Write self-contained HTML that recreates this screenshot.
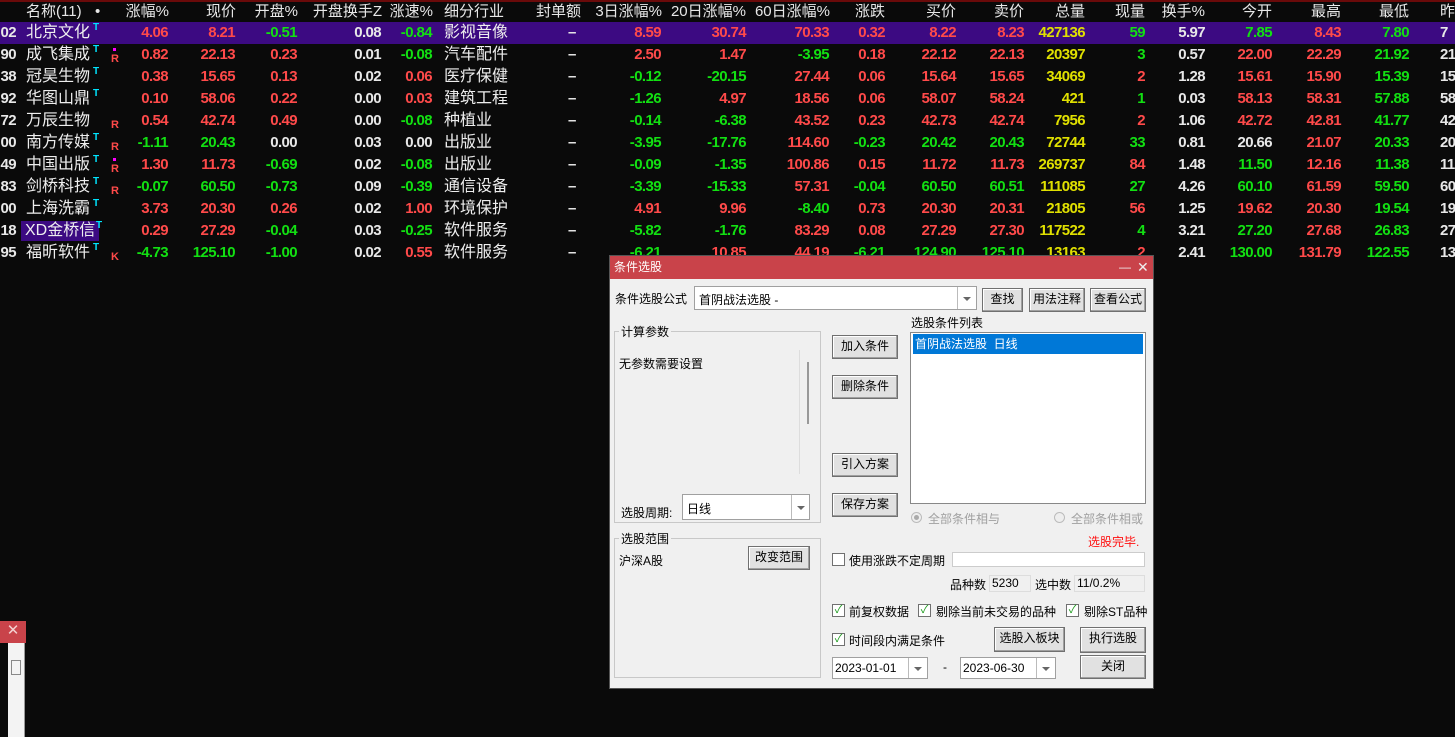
<!DOCTYPE html>
<html><head><meta charset="utf-8"><style>
*{margin:0;padding:0;box-sizing:border-box}
body{width:1455px;height:737px;background:#0a0a0a;overflow:hidden;position:relative;font-family:"Liberation Sans","Noto Sans CJK SC",sans-serif}
.tb{position:absolute;left:0;top:0;width:1455px;font-size:15px;font-weight:bold;letter-spacing:-0.6px}
.row{position:absolute;left:0;width:1455px;height:22px;line-height:22px}
.row span{position:absolute;white-space:nowrap}
.hd{top:0;border-top:2px solid #6a0a0a;color:#e8e8e8;font-weight:normal;line-height:20px;letter-spacing:0}
.n{font-weight:normal;color:#eee;font-size:16px;letter-spacing:0}
.r{color:#ff4a4a}.g{color:#12e012}.w{color:#e8e8e8}.y{color:#e0e000}
.T{color:#00e5ff;font-size:10px;line-height:12px;top:0}
.R{color:#ff4a4a;font-size:11px;top:4px}
.dot{position:absolute;width:3px;height:3px;background:#f0f;left:113px;top:4px}
.c0{right:1439px}.c1{left:26px}.c2{left:111px}
.c3{right:1287px}.c4{right:1220px}.c5{right:1158px}.c6{right:1074px}.c7{right:1023px}
.c8{left:444px}.c9{left:568px}.c10{right:794px}.c11{right:709px}.c12{right:626px}.c13{right:570px}
.c14{right:499px}.c15{right:431px}.c16{right:370px}.c17{right:310px}.c18{right:250px}
.c19{right:183px}.c20{right:114px}.c21{right:46px}.c22{left:1440px}
.dlg{position:absolute;left:609px;top:255px;width:545px;height:434px;background:#f0f0f0;border:1px solid #555;font-size:12px;color:#000;z-index:5}
.dlg *{position:absolute;white-space:nowrap}
.ttl{left:0;top:0;width:543px;height:23px;background:#c9434a;color:#fff;font-size:12px;line-height:22px;padding-left:4px}
.btn{background:#e1e1e1;border:1px solid #707070;box-shadow:inset -1px -1px #a0a0a0,inset 1px 1px #fff;text-align:center;line-height:21px}
.box{background:#fff;border:1px solid #a0a0a0}
.grp{border:1px solid #c8c8c8}
.gl{background:#f0f0f0;padding:0 2px;top:-9px;left:4px}
.cb{width:13px;height:13px;border:1px solid #707070;background:#fff;font-size:11px;line-height:11px;color:#1a9a1a;text-align:center}
.arr{width:0;height:0;border-left:4px solid transparent;border-right:4px solid transparent;border-top:4px solid #666}
</style></head><body>
<div class="tb">
<div class="row hd"><span class="c1" style="left:26px">名称(11)</span><span style="left:95px">•</span><span style="right:1286px">涨幅%</span><span style="right:1219px">现价</span><span style="right:1157px">开盘%</span><span style="right:1073px">开盘换手Z</span><span style="right:1022px">涨速%</span><span class="c8">细分行业</span><span style="left:536px">封单额</span><span style="right:793px">3日涨幅%</span><span style="right:709px">20日涨幅%</span><span style="right:625px">60日涨幅%</span><span style="right:570px">涨跌</span><span style="right:499px">买价</span><span style="right:431px">卖价</span><span style="right:370px">总量</span><span style="right:310px">现量</span><span style="right:250px">换手%</span><span style="right:183px">今开</span><span style="right:114px">最高</span><span style="right:46px">最低</span><span class="c22">昨</span></div>

<div class="row" style="top:22px;background:#3c0a82"><span class="c0 w">02</span><span class="c1 n">北京文化</span><span class="T" style="left:93px">T</span><span class="c3 r">4.06</span><span class="c4 r">8.21</span><span class="c5 g">-0.51</span><span class="c6 w">0.08</span><span class="c7 g">-0.84</span><span class="c8 n">影视音像</span><span class="c9 w">–</span><span class="c10 r">8.59</span><span class="c11 r">30.74</span><span class="c12 r">70.33</span><span class="c13 r">0.32</span><span class="c14 r">8.22</span><span class="c15 r">8.23</span><span class="c16 y">427136</span><span class="c17 g">59</span><span class="c18 w">5.97</span><span class="c19 g">7.85</span><span class="c20 r">8.43</span><span class="c21 g">7.80</span><span class="c22 w">7</span></div>

<div class="row" style="top:44px"><span class="c0 w">90</span><span class="c1 n">成飞集成</span><span class="T" style="left:93px">T</span><i class="dot"></i><span class="c2 R">R</span><span class="c3 r">0.82</span><span class="c4 r">22.13</span><span class="c5 r">0.23</span><span class="c6 w">0.01</span><span class="c7 g">-0.08</span><span class="c8 n">汽车配件</span><span class="c9 w">–</span><span class="c10 r">2.50</span><span class="c11 r">1.47</span><span class="c12 g">-3.95</span><span class="c13 r">0.18</span><span class="c14 r">22.12</span><span class="c15 r">22.13</span><span class="c16 y">20397</span><span class="c17 g">3</span><span class="c18 w">0.57</span><span class="c19 r">22.00</span><span class="c20 r">22.29</span><span class="c21 g">21.92</span><span class="c22 w">21</span></div>

<div class="row" style="top:66px"><span class="c0 w">38</span><span class="c1 n">冠昊生物</span><span class="T" style="left:93px">T</span><span class="c3 r">0.38</span><span class="c4 r">15.65</span><span class="c5 r">0.13</span><span class="c6 w">0.02</span><span class="c7 r">0.06</span><span class="c8 n">医疗保健</span><span class="c9 w">–</span><span class="c10 g">-0.12</span><span class="c11 g">-20.15</span><span class="c12 r">27.44</span><span class="c13 r">0.06</span><span class="c14 r">15.64</span><span class="c15 r">15.65</span><span class="c16 y">34069</span><span class="c17 r">2</span><span class="c18 w">1.28</span><span class="c19 r">15.61</span><span class="c20 r">15.90</span><span class="c21 g">15.39</span><span class="c22 w">15</span></div>

<div class="row" style="top:88px"><span class="c0 w">92</span><span class="c1 n">华图山鼎</span><span class="T" style="left:93px">T</span><span class="c3 r">0.10</span><span class="c4 r">58.06</span><span class="c5 r">0.22</span><span class="c6 w">0.00</span><span class="c7 r">0.03</span><span class="c8 n">建筑工程</span><span class="c9 w">–</span><span class="c10 g">-1.26</span><span class="c11 r">4.97</span><span class="c12 r">18.56</span><span class="c13 r">0.06</span><span class="c14 r">58.07</span><span class="c15 r">58.24</span><span class="c16 y">421</span><span class="c17 g">1</span><span class="c18 w">0.03</span><span class="c19 r">58.13</span><span class="c20 r">58.31</span><span class="c21 g">57.88</span><span class="c22 w">58</span></div>

<div class="row" style="top:110px"><span class="c0 w">72</span><span class="c1 n">万辰生物</span><span class="c2 R">R</span><span class="c3 r">0.54</span><span class="c4 r">42.74</span><span class="c5 r">0.49</span><span class="c6 w">0.00</span><span class="c7 g">-0.08</span><span class="c8 n">种植业</span><span class="c9 w">–</span><span class="c10 g">-0.14</span><span class="c11 g">-6.38</span><span class="c12 r">43.52</span><span class="c13 r">0.23</span><span class="c14 r">42.73</span><span class="c15 r">42.74</span><span class="c16 y">7956</span><span class="c17 r">2</span><span class="c18 w">1.06</span><span class="c19 r">42.72</span><span class="c20 r">42.81</span><span class="c21 g">41.77</span><span class="c22 w">42</span></div>

<div class="row" style="top:132px"><span class="c0 w">00</span><span class="c1 n">南方传媒</span><span class="T" style="left:93px">T</span><span class="c2 R">R</span><span class="c3 g">-1.11</span><span class="c4 g">20.43</span><span class="c5 w">0.00</span><span class="c6 w">0.03</span><span class="c7 w">0.00</span><span class="c8 n">出版业</span><span class="c9 w">–</span><span class="c10 g">-3.95</span><span class="c11 g">-17.76</span><span class="c12 r">114.60</span><span class="c13 g">-0.23</span><span class="c14 g">20.42</span><span class="c15 g">20.43</span><span class="c16 y">72744</span><span class="c17 g">33</span><span class="c18 w">0.81</span><span class="c19 w">20.66</span><span class="c20 r">21.07</span><span class="c21 g">20.33</span><span class="c22 w">20</span></div>

<div class="row" style="top:154px"><span class="c0 w">49</span><span class="c1 n">中国出版</span><span class="T" style="left:93px">T</span><i class="dot"></i><span class="c2 R">R</span><span class="c3 r">1.30</span><span class="c4 r">11.73</span><span class="c5 g">-0.69</span><span class="c6 w">0.02</span><span class="c7 g">-0.08</span><span class="c8 n">出版业</span><span class="c9 w">–</span><span class="c10 g">-0.09</span><span class="c11 g">-1.35</span><span class="c12 r">100.86</span><span class="c13 r">0.15</span><span class="c14 r">11.72</span><span class="c15 r">11.73</span><span class="c16 y">269737</span><span class="c17 r">84</span><span class="c18 w">1.48</span><span class="c19 g">11.50</span><span class="c20 r">12.16</span><span class="c21 g">11.38</span><span class="c22 w">11</span></div>

<div class="row" style="top:176px"><span class="c0 w">83</span><span class="c1 n">剑桥科技</span><span class="T" style="left:93px">T</span><span class="c2 R">R</span><span class="c3 g">-0.07</span><span class="c4 g">60.50</span><span class="c5 g">-0.73</span><span class="c6 w">0.09</span><span class="c7 g">-0.39</span><span class="c8 n">通信设备</span><span class="c9 w">–</span><span class="c10 g">-3.39</span><span class="c11 g">-15.33</span><span class="c12 r">57.31</span><span class="c13 g">-0.04</span><span class="c14 g">60.50</span><span class="c15 g">60.51</span><span class="c16 y">111085</span><span class="c17 g">27</span><span class="c18 w">4.26</span><span class="c19 g">60.10</span><span class="c20 r">61.59</span><span class="c21 g">59.50</span><span class="c22 w">60</span></div>

<div class="row" style="top:198px"><span class="c0 w">00</span><span class="c1 n">上海洗霸</span><span class="T" style="left:93px">T</span><span class="c3 r">3.73</span><span class="c4 r">20.30</span><span class="c5 r">0.26</span><span class="c6 w">0.02</span><span class="c7 r">1.00</span><span class="c8 n">环境保护</span><span class="c9 w">–</span><span class="c10 r">4.91</span><span class="c11 r">9.96</span><span class="c12 g">-8.40</span><span class="c13 r">0.73</span><span class="c14 r">20.30</span><span class="c15 r">20.31</span><span class="c16 y">21805</span><span class="c17 r">56</span><span class="c18 w">1.25</span><span class="c19 r">19.62</span><span class="c20 r">20.30</span><span class="c21 g">19.54</span><span class="c22 w">19</span></div>

<div class="row" style="top:220px"><span class="c0 w">18</span><span class="n" style="left:21px;top:1px;height:20px;line-height:20px;width:78px;background:#3c0a82;padding-left:4px">XD金桥信</span><span class="T" style="left:96px">T</span><span class="c3 r">0.29</span><span class="c4 r">27.29</span><span class="c5 g">-0.04</span><span class="c6 w">0.03</span><span class="c7 g">-0.25</span><span class="c8 n">软件服务</span><span class="c9 w">–</span><span class="c10 g">-5.82</span><span class="c11 g">-1.76</span><span class="c12 r">83.29</span><span class="c13 r">0.08</span><span class="c14 r">27.29</span><span class="c15 r">27.30</span><span class="c16 y">117522</span><span class="c17 g">4</span><span class="c18 w">3.21</span><span class="c19 g">27.20</span><span class="c20 r">27.68</span><span class="c21 g">26.83</span><span class="c22 w">27</span></div>

<div class="row" style="top:242px"><span class="c0 w">95</span><span class="c1 n">福昕软件</span><span class="T" style="left:93px">T</span><span class="c2 R">K</span><span class="c3 g">-4.73</span><span class="c4 g">125.10</span><span class="c5 g">-1.00</span><span class="c6 w">0.02</span><span class="c7 r">0.55</span><span class="c8 n">软件服务</span><span class="c9 w">–</span><span class="c10 g">-6.21</span><span class="c11 r">10.85</span><span class="c12 r">44.19</span><span class="c13 g">-6.21</span><span class="c14 g">124.90</span><span class="c15 g">125.10</span><span class="c16 y">13163</span><span class="c17 r">2</span><span class="c18 w">2.41</span><span class="c19 g">130.00</span><span class="c20 r">131.79</span><span class="c21 g">122.55</span><span class="c22 w">131</span></div>
</div>

<div style="position:absolute;left:0;top:621px;width:26px;height:22px;background:#c9434a;color:#f3d0d0;font-size:15px;text-align:center;line-height:20px">✕</div>
<div style="position:absolute;left:8px;top:643px;width:17px;height:94px;background:#f3f3f3;border-right:1px solid #999"></div>
<div style="position:absolute;left:11px;top:660px;width:10px;height:15px;border:1px solid #888"></div>

<div class="dlg">
<div class="ttl">条件选股<span style="left:509px;top:0;color:#eee">—</span><span style="left:527px;top:0;color:#eee;font-size:14px">✕</span></div>
<span style="left:5px;top:34px">条件选股公式</span>
<div class="box" style="left:84px;top:30px;width:283px;height:24px"><span style="left:4px;top:4px">首阴战法选股 -</span><div style="left:262px;top:0;width:1px;height:22px;background:#bbb"></div><div class="arr" style="left:268px;top:10px"></div></div>
<div class="btn" style="left:372px;top:32px;width:41px;height:24px">查找</div>
<div class="btn" style="left:419px;top:32px;width:56px;height:24px">用法注释</div>
<div class="btn" style="left:480px;top:32px;width:56px;height:24px">查看公式</div>

<div class="grp" style="left:4px;top:75px;width:207px;height:192px"><span class="gl">计算参数</span>
<span style="left:4px;top:23px">无参数需要设置</span>
<div style="left:184px;top:18px;width:1px;height:124px;background:#ddd"></div>
<div style="left:192px;top:30px;width:2px;height:62px;background:#999"></div>
<span style="left:6px;top:172px">选股周期:</span>
<div class="box" style="left:67px;top:162px;width:128px;height:26px"><span style="left:4px;top:5px">日线</span><div style="left:108px;top:0;width:1px;height:24px;background:#bbb"></div><div class="arr" style="left:114px;top:11px"></div></div>
</div>

<div class="btn" style="left:222px;top:79px;width:66px;height:24px">加入条件</div>
<div class="btn" style="left:222px;top:119px;width:66px;height:24px">删除条件</div>
<div class="btn" style="left:222px;top:197px;width:66px;height:24px">引入方案</div>
<div class="btn" style="left:222px;top:237px;width:66px;height:24px">保存方案</div>

<span style="left:301px;top:58px">选股条件列表</span>
<div class="box" style="left:300px;top:76px;width:236px;height:172px;border-color:#888"><div style="left:2px;top:1px;width:230px;height:20px;background:#0078d7;color:#fff;line-height:20px;padding-left:2px">首阴战法选股&nbsp;&nbsp;日线</div></div>
<div style="left:301px;top:256px;width:11px;height:11px;border-radius:50%;border:1px solid #bbb;background:#eee"><div style="left:2px;top:2px;width:5px;height:5px;border-radius:50%;background:#aaa"></div></div>
<span style="left:318px;top:254px;color:#a0a0a0">全部条件相与</span>
<div style="left:444px;top:256px;width:11px;height:11px;border-radius:50%;border:1px solid #bbb;background:#eee"></div>
<span style="left:461px;top:254px;color:#a0a0a0">全部条件相或</span>
<span style="left:478px;top:277px;color:#ff1010">选股完毕.</span>

<div class="grp" style="left:4px;top:282px;width:207px;height:140px"><span class="gl">选股范围</span>
<span style="left:4px;top:13px">沪深A股</span>
<div class="btn" style="left:133px;top:7px;width:62px;height:24px">改变范围</div>
</div>

<div class="cb" style="left:222px;top:297px"></div><span style="left:239px;top:296px">使用涨跌不定周期</span>
<div class="box" style="left:342px;top:296px;width:193px;height:15px;border-color:#ccc"></div>
<span style="left:340px;top:320px">品种数</span><div style="left:379px;top:319px;width:42px;height:17px;border:1px solid #ddd;padding-left:2px;line-height:15px">5230</div>
<span style="left:425px;top:320px">选中数</span><div style="left:464px;top:319px;width:71px;height:17px;border:1px solid #ddd;padding-left:2px;line-height:15px">11/0.2%</div>
<div class="cb" style="left:222px;top:348px">✓</div><span style="left:239px;top:347px">前复权数据</span>
<div class="cb" style="left:308px;top:348px">✓</div><span style="left:326px;top:347px">剔除当前未交易的品种</span>
<div class="cb" style="left:456px;top:348px">✓</div><span style="left:474px;top:347px">剔除ST品种</span>
<div class="cb" style="left:222px;top:377px">✓</div><span style="left:239px;top:376px">时间段内满足条件</span>
<div class="btn" style="left:384px;top:371px;width:71px;height:25px">选股入板块</div>
<div class="btn" style="left:470px;top:371px;width:66px;height:26px">执行选股</div>
<div class="box" style="left:222px;top:401px;width:96px;height:22px"><span style="left:2px;top:3px">2023-01-01</span><div style="left:75px;top:0;width:1px;height:20px;background:#bbb"></div><div class="arr" style="left:81px;top:9px"></div></div>
<span style="left:333px;top:404px">-</span>
<div class="box" style="left:350px;top:401px;width:96px;height:22px"><span style="left:2px;top:3px">2023-06-30</span><div style="left:75px;top:0;width:1px;height:20px;background:#bbb"></div><div class="arr" style="left:81px;top:9px"></div></div>
<div class="btn" style="left:470px;top:399px;width:66px;height:24px">关闭</div>
</div>
</body></html>
